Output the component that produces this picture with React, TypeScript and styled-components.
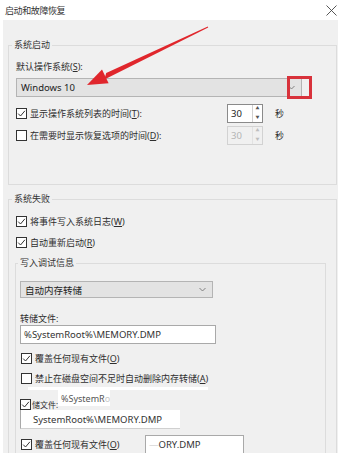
import styled, { createGlobalStyle } from "styled-components";

const GlobalStyle = createGlobalStyle`
  html, body { margin: 0; padding: 0; background: #fff; }
  body {
    font-family: "Noto Sans", "Noto Sans CJK SC", sans-serif;
    font-size: 9px;
    color: #2e2e2e;
  }
`;

const Page = styled.div`
  position: relative;
  width: 340px;
  height: 458px;
  overflow: hidden;
  background: #fff;
`;

const TitleBar = styled.div`
  height: 20px;
  display: flex;
  align-items: center;
  justify-content: space-between;
  padding: 0 3px 0 5px;
`;

const Title = styled.span`
  font-size: 9px;
  letter-spacing: -0.4px;
  color: #333;
`;

const Body = styled.div`
  margin-left: 3px;
  width: 335px;
  height: 433px;
  background: #f0f0f0;
  padding: 19px 0 0 5px;
  box-sizing: border-box;
  overflow: hidden;
`;

const Group = styled.fieldset<{ $width: number; $bottom?: number; $pad?: number }>`
  margin: 0;
  min-width: 0;
  width: ${(p) => p.$width}px;
  box-sizing: border-box;
  border: 1px solid #dcdcdc;
  padding: 0 0 ${(p) => p.$bottom ?? 0}px ${(p) => p.$pad ?? 3}px;
`;

const Legend = styled.legend`
  padding: 0 2px;
  font-size: 9px;
  line-height: 12px;
  color: #333;
`;

const Content = styled.div<{ $pad?: number }>`
  display: flex;
  flex-direction: column;
  padding-left: ${(p) => p.$pad ?? 4}px;
`;

const FieldLabel = styled.div<{ $top: number }>`
  margin-top: ${(p) => p.$top}px;
  line-height: 12px;
  height: 12px;
`;

const Select = styled.div<{ $top: number; $width: number; $height: number }>`
  margin-top: ${(p) => p.$top}px;
  width: ${(p) => p.$width}px;
  height: ${(p) => p.$height}px;
  box-sizing: border-box;
  border: 1px solid #b4b4b4;
  background: #e3e3e3;
  display: flex;
  align-items: center;
  justify-content: space-between;
  padding: 0 6px 0 4px;
  font-size: 9.5px;
  color: #222;
`;

const Chevron = styled.svg`
  width: 7px;
  height: 5px;
`;

const SpinRow = styled.div<{ $top: number }>`
  margin-top: ${(p) => p.$top}px;
  height: 19px;
  display: grid;
  grid-template-columns: 211px 36px auto;
  align-items: center;
`;

const Spin = styled.div<{ $disabled?: boolean }>`
  height: 19px;
  box-sizing: border-box;
  border: 1px solid ${(p) => (p.$disabled ? "#d2d2d2" : "#8a8a8a")};
  background: ${(p) => (p.$disabled ? "#f0f0f0" : "#fff")};
  color: ${(p) => (p.$disabled ? "#b4b4b4" : "#222")};
  display: flex;
  align-items: center;
  justify-content: space-between;
  padding-left: 3px;
  font-size: 9.5px;
`;

const SpinButtons = styled.div<{ $disabled?: boolean }>`
  width: 9px;
  height: 100%;
  display: flex;
  flex-direction: column;
  align-items: center;
  justify-content: space-around;
  border-left: 1px solid ${(p) => (p.$disabled ? "#e2e2e2" : "#d0d0d0")};
  color: ${(p) => (p.$disabled ? "#bdbdbd" : "#555")};
  font-size: 4px;
  line-height: 4px;
`;

const Unit = styled.span`
  padding-left: 12px;
`;

const CheckRow = styled.div<{ $top: number; $height?: number }>`
  margin-top: ${(p) => p.$top}px;
  height: ${(p) => p.$height ?? 14}px;
  display: flex;
  align-items: center;
  gap: 3px;
  white-space: nowrap;
`;

const Label = styled.span`
  white-space: nowrap;
`;

const Box = styled.span`
  width: 11px;
  height: 11px;
  box-sizing: border-box;
  border: 1px solid #333;
  background: #fff;
  display: inline-flex;
  align-items: center;
  justify-content: center;
  flex: none;
`;

const TextInput = styled.div<{ $width: number }>`
  width: ${(p) => p.$width}px;
  height: 19px;
  box-sizing: border-box;
  border: 1px solid #a9a9a9;
  background: #fff;
  display: flex;
  align-items: center;
  padding-left: 3px;
  font-size: 9.5px;
  color: #333;
  white-space: nowrap;
`;

const Strip = styled.div`
  margin: 2px 0 0 8px;
  width: 180px;
  height: 3px;
  background: #fff;
`;

const GlitchRow = styled.div`
  height: 18px;
  display: flex;
  align-items: flex-start;
`;

const GlitchLabel = styled.div`
  margin-top: 8px;
  display: flex;
  align-items: center;
  gap: 1px;
  width: 38px;
  height: 12px;
  font-size: 8px;
  white-space: nowrap;
`;

const Ghost = styled.div<{ $width: number; $height: number }>`
  width: ${(p) => p.$width}px;
  height: ${(p) => p.$height}px;
  background: #fff;
  display: flex;
  align-items: center;
  padding-left: 3px;
  box-sizing: border-box;
  font-size: 9px;
  color: #555;
  overflow: hidden;
  white-space: nowrap;
`;

const Band = styled.div`
  margin-top: 2px;
  width: 160px;
  height: 19px;
  box-sizing: border-box;
  border-left: 1px solid #a9a9a9;
  border-bottom: 1px solid #d0d0d0;
  background: #fff;
  display: flex;
  align-items: center;
  padding-left: 12px;
  font-size: 9.5px;
  color: #333;
  overflow: hidden;
  white-space: nowrap;
`;

const LastRow = styled.div`
  margin-top: 6px;
  height: 18px;
  display: grid;
  grid-template-columns: 125px 99px;
  align-items: center;
`;

const Fade = styled.span`
  color: #c8c8c8;
`;

const Overlay = styled.svg`
  position: absolute;
  left: 0;
  top: 0;
  width: 340px;
  height: 458px;
  pointer-events: none;
`;

const Check = () => (
  <svg width="9" height="9" viewBox="0 0 9 9">
    <path d="M1.2 4.6 L3.5 7 L7.9 1.8" fill="none" stroke="#333" strokeWidth="1" />
  </svg>
);

const CheckBox = ({ checked }: { checked?: boolean }) => <Box>{checked && <Check />}</Box>;

const Down = () => (
  <Chevron viewBox="0 0 7 5">
    <path d="M0.5 1 L3.5 4 L6.5 1" fill="none" stroke="#777" strokeWidth="0.9" />
  </Chevron>
);

const SpinBox = ({ disabled }: { disabled?: boolean }) => (
  <Spin $disabled={disabled}>
    30
    <SpinButtons $disabled={disabled}>
      <span>▲</span>
      <span>▼</span>
    </SpinButtons>
  </Spin>
);

const App = () => {
  return (
    <Page>
      <GlobalStyle />
      <TitleBar>
        <Title>启动和故障恢复</Title>
        <svg width="11" height="11" viewBox="0 0 11 11">
          <path d="M0.5 0.5 L10.5 10.5 M10.5 0.5 L0.5 10.5" stroke="#444" strokeWidth="0.9" />
        </svg>
      </TitleBar>
      <Body>
        <Group $width={329} $bottom={39}>
          <Legend>系统启动</Legend>
          <Content>
            <FieldLabel $top={10}>
              默认操作系统(<u>S</u>):
            </FieldLabel>
            <Select $top={5} $width={286} $height={19}>
              Windows 10
              <Down />
            </Select>
            <SpinRow $top={7}>
              <CheckRow $top={0}>
                <CheckBox checked />
                <Label>
                  显示操作系统列表的时间(<u>T</u>):
                </Label>
              </CheckRow>
              <SpinBox />
              <Unit>秒</Unit>
            </SpinRow>
            <SpinRow $top={3}>
              <CheckRow $top={0}>
                <CheckBox />
                <Label>
                  在需要时显示恢复选项的时间(<u>D</u>):
                </Label>
              </CheckRow>
              <SpinBox disabled />
              <Unit>秒</Unit>
            </SpinRow>
          </Content>
        </Group>

        <Group $width={329} style={{ marginTop: 8 }}>
          <Legend>系统失败</Legend>
          <Content>
            <CheckRow $top={9}>
              <CheckBox checked />
              <Label>
                将事件写入系统日志(<u>W</u>)
              </Label>
            </CheckRow>
            <CheckRow $top={7}>
              <CheckBox checked />
              <Label>
                自动重新启动(<u>R</u>)
              </Label>
            </CheckRow>
            <Group $width={311} $pad={2} style={{ marginTop: 8, marginLeft: -1 }}>
              <Legend>写入调试信息</Legend>
              <Content $pad={2}>
                <Select $top={12} $width={193} $height={17}>
                  自动内存转储
                  <Down />
                </Select>
                <FieldLabel $top={15}>转储文件:</FieldLabel>
                <TextInput $width={196}>%SystemRoot%\MEMORY.DMP</TextInput>
                <CheckRow $top={7} style={{ marginLeft: 1 }}>
                  <CheckBox checked />
                  <Label>
                    覆盖任何现有文件(<u>O</u>)
                  </Label>
                </CheckRow>
                <CheckRow $top={6} style={{ marginLeft: 1 }}>
                  <CheckBox />
                  <Label>
                    禁止在磁盘空间不足时自动删除内存转储(<u>A</u>)
                  </Label>
                </CheckRow>
                <Strip />
                <GlitchRow>
                  <GlitchLabel>
                    <CheckBox checked />
                    <Label>储文件:</Label>
                  </GlitchLabel>
                  <Ghost $width={52} $height={16}>
                    <Label>
                      %SystemR<Fade>o</Fade>
                    </Label>
                  </Ghost>
                </GlitchRow>
                <Band>
                  <Label>SystemRoot%\MEMORY.DMP</Label>
                </Band>
                <LastRow>
                  <CheckRow $top={0} style={{ marginLeft: 1 }}>
                    <CheckBox checked />
                    <Label>
                      覆盖任何现有文件(<u>O</u>)
                    </Label>
                  </CheckRow>
                  <TextInput $width={99}>
                    <Label>
                      <Fade>—</Fade>ORY.DMP
                    </Label>
                  </TextInput>
                </LastRow>
              </Content>
            </Group>
          </Content>
        </Group>
      </Body>
      <Overlay viewBox="0 0 340 458">
        <polygon points="208.2,27.5 207.8,26.6 106.2,73 104.4,79.5" fill="#e0262c" />
        <polygon points="87,85 102,69.6 108.6,83.2" fill="#e0262c" />
        <rect x="288.5" y="77.5" width="22" height="20" fill="none" stroke="#d8323b" strokeWidth="3" />
      </Overlay>
    </Page>
  );
};

export default App;
